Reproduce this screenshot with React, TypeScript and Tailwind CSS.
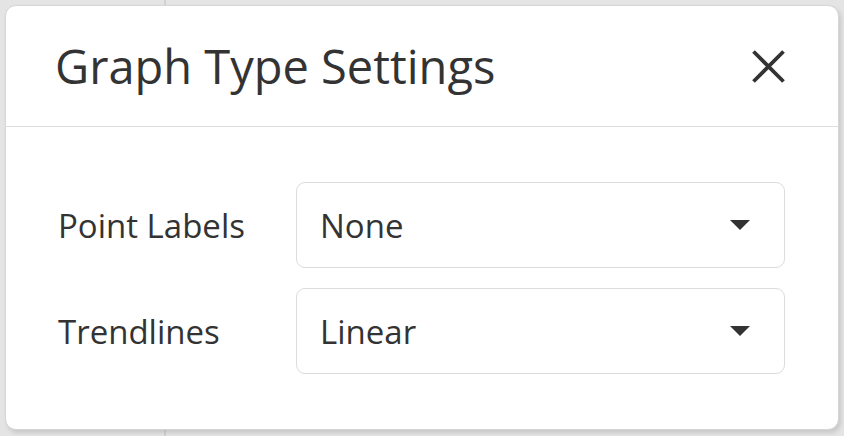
import React from "react";

function Select({ value }: { value: string }) {
  return (
    <div className="flex h-[86px] w-[489px] items-center justify-between rounded-[9px] border-[1.5px] border-[#dcdcdc] bg-white pl-[23px] pr-[34px]">
      <span className="text-[33px] leading-none text-[#333]">{value}</span>
      <svg width="20" height="10" viewBox="0 0 20 10">
        <path d="M0 0 L20 0 L10 10 Z" fill="#333" />
      </svg>
    </div>
  );
}

export default function App() {
  return (
    <div
      className="relative h-[436px] w-[844px] overflow-hidden bg-[#e4e4e4]"
      style={{ fontFamily: '"Open Sans", "Noto Sans", sans-serif' }}
    >
      <div className="absolute left-[164px] top-0 h-full w-[2px] bg-[#d2d2d2]" />
      <div className="relative pl-[5px] pt-[5px]">
        <div className="flex h-[425px] w-[834px] flex-col rounded-[11px] border border-[#d6d6d6] bg-white shadow-[2px_3px_4px_rgba(0,0,0,0.12)]">
          <div className="flex h-[121px] items-center justify-between border-b-[1.5px] border-[#dedede] pl-[49px] pr-[52px]">
            <span className="text-[47px] leading-none text-[#333]">Graph Type Settings</span>
            <svg width="35" height="35" viewBox="0 0 35 35">
              <path d="M2.5 2.5 L32.5 32.5 M32.5 2.5 L2.5 32.5" stroke="#333" strokeWidth="3.8" />
            </svg>
          </div>
          <div className="flex flex-col gap-[20px] pl-[52px] pt-[55px]">
            <div className="flex items-center">
              <span className="w-[238px] text-[33px] leading-none text-[#333]">Point Labels</span>
              <Select value="None" />
            </div>
            <div className="flex items-center">
              <span className="w-[238px] text-[33px] leading-none text-[#333]">Trendlines</span>
              <Select value="Linear" />
            </div>
          </div>
        </div>
      </div>
    </div>
  );
}
